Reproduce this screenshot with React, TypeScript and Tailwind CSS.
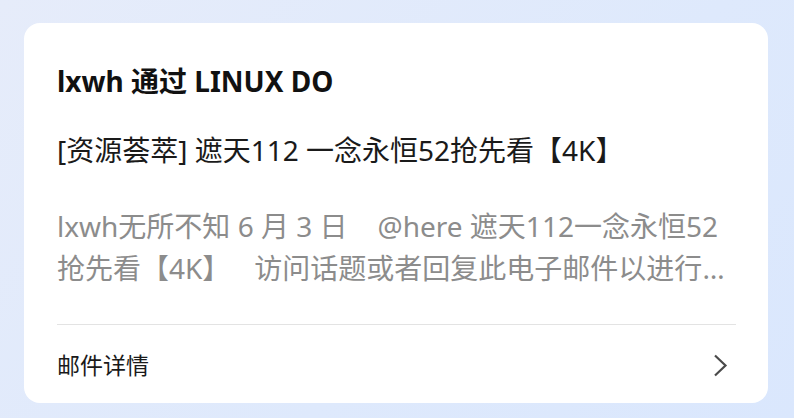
const font = "font-['Noto_Sans','Noto_Sans_CJK_SC','Noto_Sans_CJK_JP',sans-serif]";

export default function App() {
  return (
    <div
      className={`w-[794px] h-[418px] pt-[23px] pl-[24px] bg-[linear-gradient(135deg,#e6ecfa_0%,#dee9fc_60%,#dae7fd_100%)] ${font}`}
    >
      <div className="w-[744px] h-[380px] bg-white rounded-[16px] pl-[33px] pr-[32px] pt-[38px] flex flex-col">
        {/* Sender */}
        <div className="text-[28px] leading-[40px] font-bold text-[#111]">lxwh 通过 LINUX DO</div>

        {/* Subject */}
        <div className="mt-[29px] text-[28px] leading-[40px] text-[#1a1a1a]">
          [资源荟萃] 遮天112 一念永恒52抢先看【4K】
        </div>

        {/* Preview */}
        <p className="mt-[35px] text-[28px] leading-[42px] text-[#8c8c8c] line-clamp-2">
          lxwh无所不知 6 月 3 日<span className="inline-block w-[30px]" />@here 遮天112一念永恒52抢先看【4K】<span className="inline-block w-[24px]" />访问话题或者回复此电子邮件以进行讨论。要取消订阅这些电子邮件，请点击此处。
        </p>

        <div className="mt-[35px] h-px bg-[#e3e3e3]" />

        {/* Footer */}
        <div className="flex-1 flex items-center justify-between">
          <span className="text-[23px] text-[#1a1a1a] mt-[2px]">邮件详情</span>
          <svg width="15" height="23" viewBox="0 0 15 23" className="mr-[8px] mt-[2px]" fill="none">
            <path d="M2 1.5 L12.5 11.5 L2 21.5" stroke="#4a4a4a" strokeWidth="2.2" />
          </svg>
        </div>
      </div>
    </div>
  );
}
